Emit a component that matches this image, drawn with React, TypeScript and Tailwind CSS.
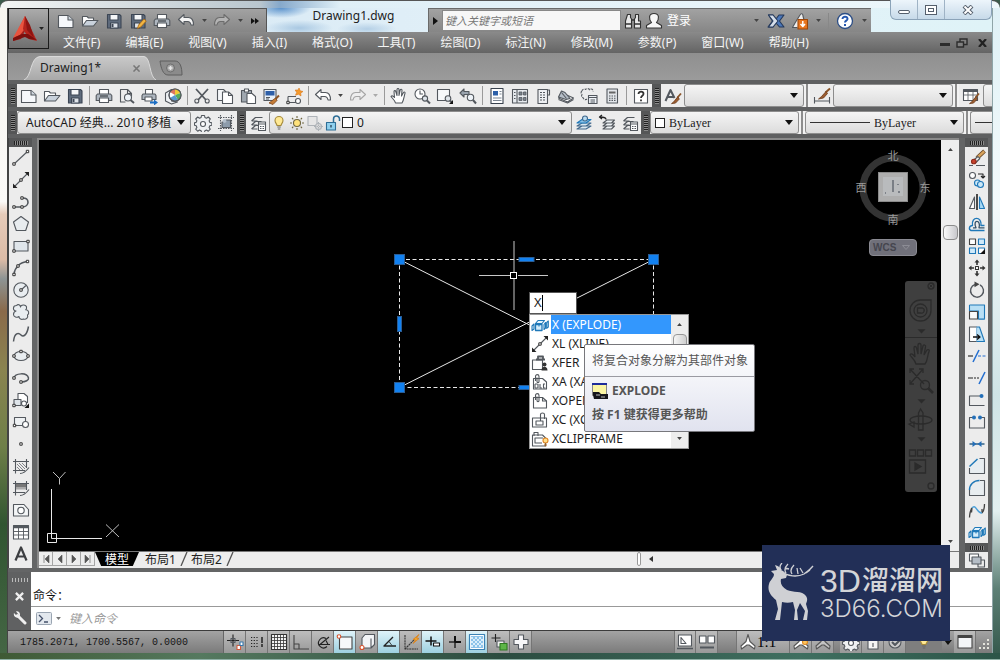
import React, { useState } from 'react';
import type { ReactNode } from 'react';

const UI = "font-['Noto_Sans','Noto_Sans_CJK_SC',sans-serif]";

/* ---------- icons: 18 x 18 grid ---------- */

function Ic({ children, s = '#53585e', w = 1.1 }: { children: ReactNode; s?: string; w?: number }) {
  return (
    <svg viewBox="0 0 18 18" className="size-[18px] shrink-0" fill="none" stroke={s} strokeWidth={w} strokeLinejoin="round" aria-hidden="true">
      {children}
    </svg>
  );
}

const D = '#3d3f42';
const B = '#1f78b8';
const node = (x: number, y: number, k: string) => <rect key={k} x={x - 1.2} y={y - 1.2} width="2.4" height="2.4" fill="#fff" stroke="#333" strokeWidth="1" />;

const newDoc = <Ic><path d="M1.5 3.5h9.5l5 4.5v7.5h-14.500z" fill="#f6f8fb" /><path d="M11 3.500v4.500h5" fill="#cfd6de" /></Ic>;
const openDoc = <Ic><path d="M1.500 14v-9.500h4.500l1.500 1.500h5v3" fill="#fff" /><path d="M1.500 14l4-5.500h11.500l-4.500 5.500z" fill="#c9d2dc" /></Ic>;
const saveDoc = <Ic s="#3c4654"><path d="M2.500 2.500h12l1.500 1.500v12h-13.500z" fill="#5f6c7d" /><path d="M5 2.500h8v5.500h-8z" fill="#f4f6f8" /><path d="M5.500 11h7.500v5h-7.500z" fill="#dfe4ea" /><path d="M7.500 12v3" strokeWidth="2" /></Ic>;
const saveAs = <Ic s="#3c4654"><path d="M2.500 2.500h12l1.500 1.500v12h-13.500z" fill="#5f6c7d" /><path d="M5 2.500h8v5.500h-8z" fill="#f4f6f8" /><path d="M5.500 11h5v5h-5z" fill="#dfe4ea" /><path d="M8.500 16.500l1-3.500 5.500-6 2.300 2-5.500 6z" fill="#f2b543" stroke="#a36414" strokeWidth=".8" /></Ic>;
const printer = <Ic><path d="M4.500 7v-4.500h9v4.500" fill="#fff" /><path d="M2.500 7h13l1.300 1.500v5h-15.600v-5z" fill="#aeb6bf" /><path d="M4.500 11h9v4.500h-9z" fill="#fff" /><path d="M5 9h8" strokeWidth="1.500" /></Ic>;
const preview = <Ic><path d="M9.500 2.500h-7v12.500h5M9.500 2.500l4 4v3" fill="none" /><path d="M9.500 2.500v4h4" /><circle cx="10" cy="10.500" r="3.500" fill="#eef3f8" /><path d="M12.500 13l3.500 3" strokeWidth="2" /></Ic>;
const publish = <Ic><path d="M4.500 7v-4.500h7v4.500" fill="#fff" /><path d="M2 7h12l1 1.500v4h-14v-4z" fill="#aeb6bf" /><path d="M4 10h7v4h-7z" fill="#fff" /><path d="M9 14.500h4v-2l4 3-4 3v-2h-4z" fill="#1d6fc4" stroke="none" /></Ic>;
const sphere = <Ic><path d="M1.500 6l6-3.500v11.500l6 1-6 2-6-3z" fill="#eef1f4" /><circle cx="11" cy="8" r="6" fill="#fff" /><path d="M11 8V2a6 6 0 0 1 5.500 4z" fill="#f0ca35" stroke="none" /><path d="M11 8l5.500-2a6 6 0 0 1-2.500 7z" fill="#56ac5c" stroke="none" /><path d="M11 8l3 5a6 6 0 0 1-8-2z" fill="#5898cf" stroke="none" /><path d="M11 8L6 5a6 6 0 0 1 5-3z" fill="#dc7661" stroke="none" /><circle cx="11" cy="8" r="6" /></Ic>;
const cut = <Ic><path d="M3 2l10 11M15 2L5 13" strokeWidth="1.800" /><circle cx="3.800" cy="14" r="2" /><circle cx="14.200" cy="14" r="2" /></Ic>;
const copy = <Ic><path d="M1.500 2.500h6l2.500 2.500v8.500h-8.500z" fill="#f4f6f8" /><path d="M6.500 5h6l4 3.500v8h-10z" fill="#fff" /><path d="M12.500 5v3.500h4" /></Ic>;
const paste = <Ic><path d="M2.500 3.500h10v11.500h-10z" fill="#a0a8b0" /><path d="M5.500 2h4v3h-4z" fill="#fff" /><path d="M8 6.500h5l3.500 3v7h-8.500z" fill="#fff" /></Ic>;
const match = <Ic><path d="M2 2.500h12v11h-12z" fill="#e8f0f8" /><path d="M3.500 4h9v4.500h-9z" fill="#2e5fa8" stroke="none" /><path d="M4 10.500h4M4 12h3" /><path d="M17 8.500l-3.500 3.500" stroke="#8a5428" strokeWidth="2" /><path d="M13.500 11l1.500 2.500-4 4-4-1.500z" fill="#c47b35" stroke="#7b461c" strokeWidth=".8" /></Ic>;
const blockEd = <Ic><path d="M3 9.500h8M3 9.500v6h10M13 11v4.500" /><circle cx="13" cy="14" r="2.500" fill="#fff" /><path d="M14 1l1.200 2.800 2.800.7-2.300 1.500.3 3-2.500-1.800-3 1 1.200-2.700-1.500-2.500h3z" fill="#f49a2c" stroke="#d8761a" strokeWidth=".6" />{node(3, 15.500, 'a')}</Ic>;
const undo = (c: string) => <Ic><path d="M1.500 7.500l5.500-5v3h4.500c3 0 5 2.500 5 7.500h-2.500c-.5-3-1.500-3.500-3.500-3.500h-3.500v3z" fill={c} /></Ic>;
const redo = (c: string, s: string) => <Ic s={s}><path d="M16.500 7.500l-5.500-5v3h-4.500c-3 0-5 2.500-5 7.500h2.500c.5-3 1.500-3.500 3.500-3.500h3.500v3z" fill={c} /></Ic>;
const hand = <Ic><path d="M5.500 16c-.5-2.500-3-4.500-4.500-6.500 1-1.200 2.200-.4 3.500 1L4 4.500c.2-1.200 1.500-1.200 1.800 0L7 8.500V2.500c.2-1.300 1.800-1.300 2 0v6l1.200-5.500c.4-1.200 1.800-1 1.800.3L11.500 9l2-3.500c.7-1 1.900-.3 1.500.8-1 3-1 6.500-3 9.700z" fill="#fff" /></Ic>;
const zoomRt = <Ic><circle cx="7" cy="7" r="5" fill="#fff" /><path d="M7 3.500v3.500h3" /><circle cx="12" cy="11.500" r="2.600" fill="#dfe5eb" /><path d="M14 13.500l3 3" strokeWidth="2" /></Ic>;
const zoomWin = <Ic><path d="M1.500 2.500h12v11h-12z" fill="#f6f8fa" /><circle cx="12" cy="11.500" r="2.800" fill="#dfe5eb" /><path d="M14 13.500l1.500 1.500" strokeWidth="1.800" /><path d="M17 13v4h-4z" fill="#111" stroke="none" /></Ic>;
const zoomPrev = <Ic><path d="M1 6l4-4v2.500h5v3h-5V10z" fill="#9aa4ae" /><circle cx="11.500" cy="10.500" r="3.200" fill="#eef3f8" /><path d="M14 13l3 3.500" strokeWidth="2" /></Ic>;
const props = <Ic s="#39424e"><path d="M3 1.500h12v15h-12z" fill="#fff" /><path d="M5 4h5v4.500h-5z" fill="#2d60a8" stroke="none" /><path d="M11.500 4.500h2M11.500 7h2M5 11h8.500M5 13.500h8.500" stroke="#7d8793" /></Ic>;
const dcenter = <Ic><path d="M1.500 2.500h15v13.500h-15zM6 2.500v13.500" fill="#e6eaee" /><path d="M3 5.500h1.500M3 8.500h1.500M3 11.500h1.500" /><path d="M8 5h3v3h-3zM12.500 5h2.500v3h-2.500zM8 10.500h3v3h-3zM12.500 10.500h2.500v3h-2.500z" fill="#79828c" strokeWidth=".8" /></Ic>;
const palette = <Ic><path d="M4 2.500h9.500v14h-9.500z" fill="#eef0f3" /><path d="M13.500 3h2v5h-2" /><path d="M6 5.500h5M6 8h5M6 10.500h5M6 13h5" strokeDasharray="2 1" /></Ic>;
const sheetSet = <Ic><path d="M1.500 11l7-3.500 8 3.500-6 4z" fill="#fff" /><path d="M1.500 10l3-6 3.500 1.500 5 6-4 1z" fill="#b6bec7" /><path d="M4.500 5.500l5 6" /><path d="M1.500 12.500l9 3.500 6-3.500" /></Ic>;
const markup = <Ic><path d="M2 4c0-2 3-2.500 3.500-1.500 1-1.500 4-1 4 .3 1.500-1.500 4-.5 3.500 1.500M2 4c-1.500 1-1 3 0 3.500-1 1.500 0 3.500 1.500 3.500 0 2 2.500 2 3.500 1" strokeDasharray="2.500 1" /><path d="M8.500 8.500h8.500v8h-8.500z" fill="#eef2f6" /><path d="M8.500 10.500h8.500M10.500 13h4.500M10.500 15h4.500" /></Ic>;
const calc = <Ic><path d="M4 2h10.500v14h-10.500z" fill="#e3e6ea" /><path d="M6 4.500h6.500v2h-6.500z" fill="#666" stroke="none" /><path d="M6 9h7M6 11.200h7M6 13.400h7" strokeDasharray="1.500 1" /></Ic>;
const help = <Ic><path d="M2.500 2.500h13v13.500h-13z" fill="#fff" /><path d="M6.500 7c0-3.300 5.300-3 5 0-.2 1.800-2.500 1.800-2.500 4M9 12.500v1.800" strokeWidth="1.800" stroke="#333" /></Ic>;
const brush = <g><path d="M17 6.500l-3.500 4" stroke="#8a5428" strokeWidth="1.800" /><path d="M13.800 9.800l1.500 2.300-3.800 4-4 .5 2-1.500z" fill="#9c5c30" stroke="#6b3a18" strokeWidth=".8" /></g>;
const textStyle = <Ic><path d="M1.500 14L6.500 3l4 8M3.300 10h6" strokeWidth="2" />{brush}</Ic>;
const dimStyle = <Ic><path d="M1.500 10v6.500M16.500 10v6.500M1.500 14h15" /><path d="M17 1.500l-4.500 4" stroke="#8a5428" strokeWidth="2" /><path d="M13 4.500l1.500 2-4 4.500-5 1 3-2.500z" fill="#9c5c30" stroke="#6b3a18" strokeWidth=".8" /></Ic>;
const tableStyle = <Ic><path d="M1.500 2.500h14v11h-14z" fill="#fff" /><path d="M1.500 4h14" strokeWidth="2" /><path d="M1.500 8h14M6 4v9.500M11 4v9.500" strokeWidth=".8" />{brush}</Ic>;
const gear = <Ic><path d="M7.500 1.500h3l.4 2 1.600.7 1.800-1.200 2 2-1.200 1.800.7 1.600 2 .4v2.500l-2 .5-.7 1.600 1.200 1.800-2 2-1.800-1.200-1.600.7-.4 1.800h-3l-.4-1.800-1.600-.7-1.800 1.200-2-2 1.200-1.800-.7-1.600-1.700-.5V8.800l1.700-.4.7-1.600L1.700 5l2-2 1.800 1.200 1.600-.7z" fill="#eef0f2" /><circle cx="9" cy="10" r="2.500" fill="#fff" /></Ic>;
const workspace = <Ic><path d="M1 3.500h16M1 14.500h16M3.500 1v16M14.500 1v16" strokeDasharray="1.500 1" /><path d="M5 8h3l1-2h4.500v7.500H5z" fill="#8d9cab" /><circle cx="7.500" cy="7" r="2" fill="#b4c0cc" stroke="none" /></Ic>;
const layers = (acc: ReactNode) => <Ic><path d="M2.500 7l4-3.500h7M2.500 7h6M2.500 11l4-3.500h6M2.500 11h6M2.500 15l4-3.500h6M2.500 15h6" strokeWidth="1.200" />{acc}</Ic>;
const layerProps = layers(<g><path d="M9.500 8h7v8.500h-7z" fill="#fff" /><path d="M9.500 10h7M11 12.500h1.500M13.500 12.500h1.500M11 14.500h1.500M13.500 14.500h1.500" /></g>);
const layerCur = <Ic s="#42698c"><path d="M2 15l5-3h9l-5 3zM2 12l5-3h9l-5 3z" fill="#dde8f0" /><path d="M2 9l5-3.500h9l-5 3.500z" fill="#8ac2e8" stroke={B} /><circle cx="10" cy="4.500" r="2.500" fill="#b8dcf2" /></Ic>;
const layerPrev = <Ic><path d="M5 9l4-3h7.500l-3 3zM5 12l4-3h7.500l-3 3zM5 15l4-3h7.500l-3 3z" fill="#eef2f5" /><path d="M8 5.500C8 3.500 6 3 2 3M4 1L1.500 3 4 5" stroke="#222" strokeWidth="1.300" /></Ic>;
const bulb = <Ic><path d="M7 11.500c0-1.500-2-2.500-2-5a4 4 0 0 1 8 0c0 2.500-2 3.500-2 5z" fill="#ffe994" stroke="#a58a3a" /><path d="M7.300 13h3.500M7.800 15h2.500" stroke="#666" /></Ic>;
const sun = <Ic s="#6f6640"><circle cx="9" cy="9" r="3.500" fill="#ffe27a" /><path d="M9 2v2M9 14v2M2 9h2M14 9h2M4 4l1.300 1.300M12.700 12.700l1.300 1.300M4 14l1.300-1.300M12.700 5.300L14 4" /></Ic>;
const vpFreeze = <Ic s="#aeb3b8"><path d="M2 2.500h9v9h-9z" fill="#e6e6e6" /><circle cx="12.500" cy="12.500" r="3" fill="#ddd" /><path d="M12.500 8v9M8 12.500h9" strokeDasharray="1.500 1" /></Ic>;
const lock = <Ic s="#2d6e96"><path d="M9.500 8.500v-3.500a3 3 0 0 1 6 0v2" strokeWidth="1.500" /><path d="M2.500 8.500h9v7.500h-9z" fill="#8fd0ee" /><path d="M7 11v2.500" stroke="#123" /></Ic>;

const drawTools: { name: string; icon: ReactNode }[] = [
  { name: '直线', icon: <Ic><path d="M2 15L15.500 2.500" />{node(2, 15, 'a')}{node(15.500, 2.500, 'b')}</Ic> },
  { name: '构造线', icon: <Ic><path d="M2 16L16 2" /><path d="M1 17v-4.500l4.500 4.500zM17 1v4.500L12.500 1z" fill="#222" stroke="none" />{node(9, 9, 'a')}</Ic> },
  { name: '多段线', icon: <Ic><path d="M2 14h8M10 5c8-1 8 9 0 9" strokeWidth="1.600" />{node(2, 14, 'a')}{node(10, 14, 'b')}{node(10, 5, 'c')}</Ic> },
  { name: '正多边形', icon: <Ic><path d="M9 1.500l7.500 5.500-2.800 8.500H4.300L1.500 7z" fill="#e8ecef" /></Ic> },
  { name: '矩形', icon: <Ic><path d="M2 4.500h14v9.500h-14z" fill="#dfe5ea" />{node(2, 14, 'a')}{node(16, 4.500, 'b')}</Ic> },
  { name: '圆弧', icon: <Ic><path d="M2 15c.5-6 6-12 13.500-12.500" strokeWidth="1.500" />{node(2, 15.500, 'a')}{node(6, 7, 'b')}{node(15.500, 2.500, 'c')}</Ic> },
  { name: '圆', icon: <Ic><circle cx="9" cy="9" r="7.200" fill="#e9edf0" /><path d="M9 9l5-4.500" />{node(9, 9, 'a')}</Ic> },
  { name: '修订云线', icon: <Ic><path d="M4 8C.5 8 .5 2.500 4.500 2.500 6 .8 8.500 2 8.500 4c0-2.500 5.500-3 6 0 .3 1.200 0 2-.8 2.800C17 6.500 17.500 11 15.500 12c1 2.500-1.500 5-4 4-2 1-4.500 0-4.500-2.500-2 1.500-5.500.5-5.500-2C1.500 10 2.500 8.500 4 8z" fill="#e9edf0" /></Ic> },
  { name: '样条曲线', icon: <Ic><path d="M1.500 16.500c1-9 5-9 7.500-6.500s6 0 7.500-8.500" strokeWidth="1.500" /></Ic> },
  { name: '椭圆', icon: <Ic><ellipse cx="9" cy="9" rx="7" ry="4.500" fill="#e9edf0" />{node(2, 9, 'a')}{node(16, 9, 'b')}{node(9, 4.500, 'c')}</Ic> },
  { name: '椭圆弧', icon: <Ic><path d="M2 9c1-5 13-6 14.500 0 .5 2-3 4-7 4" strokeWidth="1.500" />{node(2, 9, 'a')}{node(9, 13, 'b')}</Ic> },
  { name: '插入块', icon: <Ic><path d="M6 2.500h6l3.500 3v6h-9.500z" fill="#fff" /><path d="M2 8.500h7v6h-7z" fill="#dfe5ea" /><circle cx="12" cy="12.500" r="2.500" fill="#fff" />{node(2, 14.500, 'a')}<path d="M17 12.500v4.500h-4.500z" fill="#111" stroke="none" /></Ic> },
  { name: '创建块', icon: <Ic><path d="M2.500 4.500h11v8h-11z" fill="#eef1f3" /><circle cx="13.500" cy="11.500" r="3" fill="#fff" />{node(2.500, 12.500, 'a')}</Ic> },
  { name: '点', icon: <Ic>{node(9, 9, 'a')}</Ic> },
  { name: '图案填充', icon: <Ic><path d="M1 4.500h16M1 13.500h12M3.500 2v14.500M14.500 2v9M8 16.500c4 0 6-2 9-6" /><path d="M5 10l3 3M5 7l6 6M7 6l6 6M10 6l4 4" strokeWidth=".7" /></Ic> },
  { name: '渐变色', icon: <Ic><path d="M4 5h10v3H4z" fill="#777" stroke="none" /><path d="M4 8h10v2.500H4z" fill="#aaa" stroke="none" /><path d="M1 4.500h16M1 13.500h12M3.500 2v14.500M14.500 2v9M8 16.500c4 0 6-2 9-6" /></Ic> },
  { name: '面域', icon: <Ic><path d="M1.500 3.500h10.500l4.500 5v6.500h-15z" fill="#f4f6f7" /><circle cx="9" cy="9.500" r="3.200" fill="#fff" /></Ic> },
  { name: '表格', icon: <Ic><path d="M1.500 2.500h15v13.500h-15z" fill="#fff" /><path d="M1.500 4h15" strokeWidth="2.500" /><path d="M1.500 8.500h15M1.500 12h15M6.500 4v12M11.500 4v12" strokeWidth=".9" /></Ic> },
  { name: '多行文字', icon: <Ic s={D}><path d="M3.500 15.500L9 2.500l5.500 13M5.300 11.500h7.400" strokeWidth="2.200" /></Ic> },
];

const explode = <Ic s={B}><path d="M4.500 7.500l2.500-3h6.500l-2.500 3z" fill="#e4f4fd" /><path d="M4.500 8.500H11v6H4.500z" fill="#d4edfb" strokeWidth="1.300" /><path d="M1 10l2-2v5l-2 1.500zM13 8.500l1.500-2v5.500L13 13.500zM15.700 6.500L17.300 5v6l-1.600 1.300z" fill="#e4f4fd" /><path d="M8 8.500v2" /></Ic>;

const modifyTools: { name: string; icon: ReactNode }[] = [
  { name: '删除', icon: <Ic><path d="M16.500 2L9 9" stroke="#6b4a28" strokeWidth="4" /><path d="M16.200 2.300L9.300 8.700" stroke="#d9a35c" strokeWidth="2.500" /><path d="M10 7.500l1.800 2L8 13.500 5 11.500z" fill="#eee" /><circle cx="5.800" cy="12.500" r="2.300" fill="#c8402b" stroke="#8d2a1a" /><path d="M1 16.500h4M8 16.500h9" /></Ic> },
  { name: '复制', icon: <Ic><circle cx="4.500" cy="4.500" r="3" fill="#fff" /><path d="M10 3h5v3M13 5l2 2 2-2" stroke="#222" /><circle cx="9.500" cy="12" r="3" fill="#cce8f8" stroke={B} /><circle cx="12.500" cy="13.500" r="3" fill="#cce8f8" stroke={B} /></Ic> },
  { name: '镜像', icon: <Ic><path d="M6.500 4v11.500H1.500z" fill="#fff" /><path d="M9 1v16" stroke="#222" strokeWidth="1.600" /><path d="M11.500 4v11.500h5z" fill="#a5d8f5" stroke={B} /></Ic> },
  { name: '偏移', icon: <Ic s={B}><path d="M16.500 15.500H3c-2.500-1-2-5 1.500-5C3 1 14 1 13 10.500h3.500" strokeWidth="1.400" /><path d="M5 12.800h3c-4-8.500 5.500-8.500 3 0h5.500" stroke="#33526a" strokeWidth="1.300" /></Ic> },
  { name: '阵列', icon: <Ic s={B}><path d="M1.500 2h6v5.500h-6z" fill="#fff" stroke="#444" /><path d="M10.500 2h6v5.500h-6zM1.500 11h6v5.500h-6z" fill="#d0eafa" /><path d="M10.500 11h6v5.500h-6z" fill="#fff" /><path d="M17 12v5h-5z" fill="#111" stroke="none" /></Ic> },
  { name: '移动', icon: <Ic s="#333"><path d="M9 .5L11.500 3.500h-5zM9 17.500L6.500 14.500h5zM.5 9L3.500 6.500v5zM17.500 9L14.500 11.500v-5z" fill="#333" stroke="none" /><path d="M9 3v3M9 12v3M3 9h3M12 9h3" strokeWidth="1.600" /><path d="M7.500 7.500h3v3h-3z" fill="#fff" /></Ic> },
  { name: '旋转', icon: <Ic><path d="M7 3.500a6.500 6.500 0 1 0 5 .4" strokeWidth="1.400" /><path d="M6.500 .500l5 2.800-5 3z" fill="#444" stroke="none" /></Ic> },
  { name: '缩放', icon: <Ic s={B}><path d="M1.500 2h15v14h-6" fill="#b8dff5" /><path d="M1.500 2v6h9v8h6" fill="#b8dff5" /><path d="M1.500 8.500h8v7.500h-8z" fill="#f8fafb" stroke="#444" /></Ic> },
  { name: '拉伸', icon: <Ic><path d="M8.500 2h3l5 14.500h-8z" fill="#b8dff5" stroke={B} /><path d="M8.500 2h-7v14.500h7" fill="#fff" /><path d="M5 12h6M9 9.500l3 2.500-3 2.500" stroke="#111" strokeWidth="1.300" /></Ic> },
  { name: '修剪', icon: <Ic><path d="M0 9h5" stroke="#222" /><path d="M10 9h8" stroke="#246fd0" strokeDasharray="3 1.500" /><path d="M5 15l6-12" stroke="#246fd0" strokeWidth="1.500" /></Ic> },
  { name: '延伸', icon: <Ic><path d="M0 9h5M6 9h2M9 9h2" stroke="#222" /><path d="M11 15l6-12" stroke="#246fd0" strokeWidth="1.500" /></Ic> },
  { name: '打断于点', icon: <Ic><path d="M14 5H1.500v9.500h15" /><circle cx="13.500" cy="5" r="2" fill="#246fb8" stroke="none" /></Ic> },
  { name: '打断', icon: <Ic><path d="M5 4.500H1.500v10.500h15V4.500H13" /><circle cx="6" cy="4.500" r="2" fill="#246fb8" stroke="none" /><circle cx="12" cy="4.500" r="2" fill="#246fb8" stroke="none" /></Ic> },
  { name: '合并', icon: <Ic s="#24587e"><path d="M1.500 9h15" strokeWidth="1.400" /><path d="M4.500 6L8.500 9l-4 3zM13.500 6l-4 3 4 3z" fill="#246fb8" stroke="none" /></Ic> },
  { name: '倒角', icon: <Ic><path d="M1.500 9.500v7h15V1.500H10z" fill="#e8edf0" stroke="none" /><path d="M1.500 11v5.500h15V1.500H11.500" /><path d="M1.500 9.500l8-7.500" stroke={B} strokeWidth="1.500" /></Ic> },
  { name: '圆角', icon: <Ic><path d="M1.500 11v5.500h15V1.500H12" fill="#e8edf0" /><path d="M1.500 11c0-5.500 4-9.500 10-9.500" stroke={B} strokeWidth="1.500" /></Ic> },
  { name: '光顺曲线', icon: <Ic><path d="M1.500 16.500c.2-4 .5-7 2.500-9.500M3.500 11.500L4 7M14 12c2-2 2.500-5 2.500-9M14 12V8" stroke="#444" strokeWidth="1.300" /><path d="M4 7c4-5 5 6 10 5" stroke="#4b9fd8" strokeWidth="1.500" /></Ic> },
  { name: '分解', icon: explode },
];

/* ---------- small building blocks ---------- */

function Tool({ name, children, className = 'h-[23px] w-[23px] shrink-0' }: { name: string; children: ReactNode; className?: string }) {
  return (
    <button type="button" aria-label={name} title={name} className={`flex items-center justify-center ${className}`}>
      {children}
    </button>
  );
}

function Caret({ color = '#111', small = false }: { color?: string; small?: boolean }) {
  return (
    <svg viewBox="0 0 8 5" className={small ? 'h-[3px] w-[5px] shrink-0' : 'h-[5px] w-2 shrink-0'} aria-hidden="true">
      <path d="M0 0h8L4 5z" fill={color} />
    </svg>
  );
}

function Grip() {
  return (
    <div className="flex w-[9px] shrink-0 items-center justify-center bg-[#555657]">
      <div className="h-4 w-1 bg-[repeating-linear-gradient(180deg,#222_0px,#222_1px,#8a8a8a_1px,#8a8a8a_2px)]" />
    </div>
  );
}

function TopGrip() {
  return (
    <div className="flex h-[9px] shrink-0 items-center justify-center bg-[#555657]">
      <div className="h-1 w-3.5 bg-[repeating-linear-gradient(90deg,#222_0px,#222_1px,#8a8a8a_1px,#8a8a8a_2px)]" />
    </div>
  );
}

function Sep() {
  return <div className="mx-auto flex w-1.5 shrink-0 justify-center py-0.5"><div className="w-px bg-[#9a9a9a]" /></div>;
}

function DoubleSep() {
  return <div className="w-1.5 shrink-0 border-x-2 border-[#f2f2f2] bg-[#8d8d8d]" />;
}

function Combo({ label, value = '', className, text = 'text-xs', lead }: { label: string; value?: string; className: string; text?: string; lead?: ReactNode }) {
  return (
    <div className={`relative flex items-center rounded-[3px] border border-[#8d8d8d] bg-linear-to-b from-[#f5f5f5] to-[#dcdcdc] ${className}`}>
      {lead}
      <select aria-label={label} className={`h-full min-w-0 flex-1 appearance-none bg-transparent pr-4 text-[#1b1b1b] outline-none ${text}`}>
        <option>{value}</option>
      </select>
      <span className="pointer-events-none absolute right-[5px]"><Caret /></span>
    </div>
  );
}

/* ---------- header ---------- */

const menus = ['文件(F)', '编辑(E)', '视图(V)', '插入(I)', '格式(O)', '工具(T)', '绘图(D)', '标注(N)', '修改(M)', '参数(P)', '窗口(W)', '帮助(H)'];

function TitleBar() {
  return (
    <div className="flex h-6 bg-[linear-gradient(90deg,#d3e6f3,#e5f2f9_60%,#dff3f7)]">
      <div className="flex shrink-0 items-center border-r border-t border-[#555] bg-linear-to-b from-[#a2a2a2] to-[#868686] pl-[46px] pr-0.5">
        <Tool name="新建" className="h-6 w-6">{newDoc}</Tool>
        <Tool name="打开" className="h-6 w-6">{openDoc}</Tool>
        <Tool name="保存" className="h-6 w-6">{saveDoc}</Tool>
        <Tool name="另存为" className="h-6 w-6">{saveAs}</Tool>
        <Tool name="打印" className="h-6 w-6">{printer}</Tool>
        <Tool name="放弃" className="h-6 w-6">{undo('#f4f4f4')}</Tool>
        <Tool name="放弃列表" className="h-6 w-3"><Caret small color="#444" /></Tool>
        <Tool name="重做" className="h-6 w-6">{redo('#b4b4b4', '#6c6c6c')}</Tool>
        <Tool name="重做列表" className="h-6 w-3"><Caret small color="#444" /></Tool>
        <Tool name="更多" className="h-6 w-[18px]">
          <svg viewBox="0 0 8 6" className="h-1.5 w-2" aria-hidden="true"><path d="M0 0l4 3-4 3zM4 0l4 3-4 3z" fill="#111" /></svg>
        </Tool>
      </div>
      <div className="flex w-[161px] shrink-0 justify-center bg-[radial-gradient(ellipse_30px_10px_at_14px_0px,#5c93cc,transparent),radial-gradient(ellipse_34px_8px_at_32px_20px,#a9c8e2,transparent),radial-gradient(ellipse_30px_7px_at_100px_21px,#b5d0e6,transparent)] pl-3 text-xs leading-4 text-[#222]">Drawing1.dwg</div>
      <div className="flex w-[443px] shrink-0 items-center border-l border-t border-[#6a6a6a] bg-linear-to-b from-[#a2a2a2] to-[#868686]">
        <Tool name="收起搜索" className="h-6 w-[13px] shrink-0">
          <svg viewBox="0 0 5 8" className="h-2 w-[5px]" aria-hidden="true"><path d="M0 0l5 4-5 4z" fill="#111" /></svg>
        </Tool>
        <input aria-label="搜索" placeholder="键入关键字或短语" className="h-[21px] w-[179px] border border-[#888] bg-[#f7f7f7] px-0.5 text-[11px] italic outline-none placeholder:text-[#777]" />
        <Tool name="查找" className="h-6 w-6 shrink-0">
          <Ic s="#333"><path d="M3.500 2.500h3v3l1 1.500v9H1.500V9zM11.500 2.500h3V9l2 0v7h-6V7l1-1.500z" fill="#e9e9e9" /><path d="M1.500 12h6M10.500 12h6M7.500 8h3" strokeWidth="1.300" /></Ic>
        </Tool>
        <button type="button" className="flex items-center gap-1 text-xs text-white">
          <Ic s="#333"><path d="M9 1.500c6 0 5 6 2.500 9l5 3v2.500h-15v-2.500l5-3c-2.500-3-3.500-9 2.500-9z" fill="#f6f6f6" /></Ic>
          登录
        </button>
        <div className="ml-auto flex items-center">
          <Tool name="帐户列表" className="h-6 w-3"><Caret small color="#444" /></Tool>
          <Tool name="交换" className="ml-0.5 h-6 w-6">
            <Ic s="#24395c"><path d="M1.500 3H6l3 4 3-4h5l-4.500 6 4.500 6h-4.500l-3.500-4-3 4h-5l4.500-6z" fill="#4a76b8" /><path d="M1.500 3H6l5 6-5 6H1.500L6 9z" fill="#d5deea" /></Ic>
          </Tool>
          <Tool name="应用程序" className="h-6 w-6">
            <Ic><path d="M6 15.500H1.500L4 11 9 3c1-2 3-1.500 3 1L13 8" fill="#eee" /><path d="M7 7.500h9.500v9.500H7z" fill="#e8761f" stroke="#9e4708" /><path d="M11.800 9v5M9.500 12l2.300 2.500L14 12" stroke="#fff" strokeWidth="1.500" /></Ic>
          </Tool>
          <Tool name="应用列表" className="h-6 w-3"><Caret small color="#444" /></Tool>
          <div className="mx-1 h-4 w-px bg-[#888]" />
          <Tool name="帮助" className="h-6 w-6">
            <Ic s="#2c4e86"><circle cx="9" cy="9" r="7.500" fill="#fff" strokeWidth="1.300" /><path d="M6.500 7c0-3.300 5.300-3 5 0-.2 1.800-2.500 1.500-2.500 3.500M9 12v2" strokeWidth="2" stroke="#2457b0" /></Ic>
          </Tool>
          <Tool name="帮助列表" className="h-6 w-3.5"><Caret small color="#444" /></Tool>
        </div>
      </div>
      <div className="-mt-2 ml-auto flex h-5 shrink-0 rounded-b-md border border-t-0 border-[#8ba3b8] bg-linear-to-b from-[#edf5fb] to-[#c7dae9]">
        <Tool name="最小化" className="h-full w-[27px] border-r border-[#9fb3c5]"><span className="mt-1 h-1 w-3 rounded-sm border border-[#555f6c] bg-white" /></Tool>
        <Tool name="最大化" className="h-full w-[27px] border-r border-[#9fb3c5]"><span className="flex h-2.5 w-3 items-center justify-center border border-[#555f6c] bg-white"><span className="h-1 w-1.5 border border-[#555f6c]" /></span></Tool>
        <Tool name="关闭" className="h-full w-[46px]">
          <svg viewBox="0 0 12 10" className="h-2.5 w-3" aria-hidden="true"><path d="M2 1l8 8M10 1L2 9" stroke="#555f6c" strokeWidth="4" /><path d="M2.500 1.500l7 7M9.500 1.500l-7 7" stroke="#fff" strokeWidth="2" /></svg>
        </Tool>
      </div>
    </div>
  );
}

function Header() {
  return (
    <header className="relative">
      <TitleBar />
      <button type="button" aria-label="应用程序菜单" className="absolute left-0 top-0 flex h-[41px] w-[41px] items-center border border-[#1c1c1c] bg-linear-to-b from-[#ababab] to-[#6f6f6f] pl-1">
        <svg viewBox="0 0 24 26" className="h-[26px] w-6" aria-hidden="true">
          <path d="M12 0L0 25l8-2 4-8z" fill="#a5211c" />
          <path d="M12 0L0 22l7-3 7-9z" fill="#e9543f" />
          <path d="M12 0l12 25-8-2-6-10z" fill="#b3241d" />
          <path d="M12 0l5 9 4 13-7-8z" fill="#8c1512" />
          <path d="M0 22l9-4 6 0 9 6-8-1-4-2-12 4z" fill="#7c100e" />
        </svg>
        <span className="ml-0.5"><Caret small color="#222" /></span>
      </button>
      <nav className="flex h-[21px] items-center gap-[25px] bg-linear-to-b from-[#8a8a8a] to-[#646464] pl-[55px] text-xs text-[#f4f4f4]">
        {menus.map((m) => <button key={m} type="button" className="shrink-0 leading-4">{m}</button>)}
        <div className="ml-auto flex items-center gap-1.5 pr-[5px]">
          <button type="button" aria-label="最小化文档" className="mt-1 h-[3px] w-2.5 bg-[#2c2c2c]" />
          <button type="button" aria-label="还原文档"><svg viewBox="0 0 12 10" className="h-2.5 w-3" fill="#808080" stroke="#2c2c2c" strokeWidth="1.400" aria-hidden="true"><path d="M4 1h7v5.500H4z" /><path d="M1 4h6.500v5H1z" /></svg></button>
          <button type="button" aria-label="关闭文档"><svg viewBox="0 0 9 8" className="ml-1 h-2 w-[9px]" aria-hidden="true"><path d="M1 0l7 8M8 0L1 8" stroke="#222" strokeWidth="2.200" /></svg></button>
        </div>
      </nav>
      <div className="flex h-[27px] items-end bg-linear-to-b from-[#8f8f8f] to-[#9b9b9b] pl-4">
        <div className="relative flex h-6 w-[132px] items-center pl-4 pr-4 text-xs text-[#222]">
          <svg viewBox="0 0 132 24" className="absolute inset-0 h-full w-full" aria-hidden="true">
            <defs><linearGradient id="tab" x1="0" y1="0" x2="0" y2="1"><stop offset="0" stopColor="#c9c9c9" /><stop offset="1" stopColor="#a9a9a9" /></linearGradient></defs>
            <path d="M0 24c8-3 6-23 16-23.500h104c7 .5 5 20.500 12 23.500z" fill="url(#tab)" />
            <path d="M0 24c8-3 6-23 16-23.500h104c7 .5 5 20.500 12 23.500" fill="none" stroke="#dadada" />
          </svg>
          <a href="#drawing" className="relative">Drawing1*</a>
          <button type="button" aria-label="关闭标签" className="relative ml-auto"><svg viewBox="0 0 8 8" className="size-[7px]" aria-hidden="true"><path d="M.5.5l7 7M7.500.5l-7 7" stroke="#777" strokeWidth="1.800" /></svg></button>
        </div>
        <button type="button" aria-label="新建标签" className="mb-1 ml-[3px]">
          <svg viewBox="0 0 24 16" className="h-4 w-6" aria-hidden="true"><path d="M1 1h15c5 0 7 6 7 14H9C4 15 2 8 1 1z" fill="#8b8b8b" stroke="#5f5f5f" /><circle cx="11.500" cy="8" r="4" fill="#a4a4a4" stroke="#6d6d6d" /><path d="M11.500 6v4M9.500 8h4" stroke="#e6e6e6" strokeWidth="1.500" /></svg>
        </button>
      </div>
    </header>
  );
}

function Toolbars() {
  return (
    <div className="flex flex-col gap-1 overflow-hidden bg-[#5f6061] py-1">
      <div className="flex h-[23px]">
        <Grip />
        <div className="flex shrink-0 bg-[#ececec]">
          <Tool name="新建">{newDoc}</Tool><Tool name="打开">{openDoc}</Tool><Tool name="保存">{saveDoc}</Tool>
          <Sep />
          <Tool name="打印">{printer}</Tool><Tool name="打印预览">{preview}</Tool><Tool name="发布">{publish}</Tool><Tool name="三维打印">{sphere}</Tool>
          <Sep />
          <Tool name="剪切">{cut}</Tool><Tool name="复制">{copy}</Tool><Tool name="粘贴">{paste}</Tool><Tool name="特性匹配">{match}</Tool><Tool name="块编辑器">{blockEd}</Tool>
          <Sep />
          <Tool name="放弃">{undo('#fff')}</Tool>
          <Tool name="放弃列表" className="w-3"><Caret small color="#444" /></Tool>
          <Tool name="重做">{redo('#eee', '#a5a5a5')}</Tool>
          <Tool name="重做列表" className="w-3"><Caret small color="#aaa" /></Tool>
          <Sep />
          <Tool name="平移">{hand}</Tool><Tool name="实时缩放">{zoomRt}</Tool><Tool name="窗口缩放">{zoomWin}</Tool><Tool name="缩放上一个">{zoomPrev}</Tool>
          <Sep />
          <Tool name="特性">{props}</Tool><Tool name="设计中心">{dcenter}</Tool><Tool name="工具选项板">{palette}</Tool><Tool name="图纸集">{sheetSet}</Tool><Tool name="标记集">{markup}</Tool><Tool name="计算器">{calc}</Tool>
          <Sep />
          <Tool name="帮助">{help}</Tool>
        </div>
        <Grip />
        <div className="flex min-w-0 flex-1 overflow-hidden bg-[#ececec]">
          <Tool name="文字样式">{textStyle}</Tool>
          <Combo label="文字样式" className="w-[120px] shrink-0" />
          <DoubleSep />
          <Tool name="标注样式">{dimStyle}</Tool>
          <Combo label="标注样式" className="w-[120px] shrink-0" />
          <DoubleSep />
          <Tool name="表格样式" className="h-[23px] w-6 shrink-0">{tableStyle}</Tool>
          <Combo label="表格样式" className="w-[120px] shrink-0" />
        </div>
      </div>
      <div className="flex h-[23px]">
        <Grip />
        <div className="flex shrink-0 bg-[#ececec]">
          <Combo label="工作空间" value="AutoCAD 经典... 2010 移植" className="w-[174px] pl-2" />
          <Tool name="工作空间设置">{gear}</Tool>
          <Tool name="我的工作空间">{workspace}</Tool>
        </div>
        <Grip />
        <div className="flex min-w-0 flex-1 bg-[#ececec]">
          <Tool name="图层特性">{layerProps}</Tool>
          <Combo
            label="图层"
            value="0"
            className="min-w-0 flex-1"
            lead={<span className="flex shrink-0 items-center">{bulb}{sun}{vpFreeze}{lock}<span className="mr-1 h-[11px] w-[11px] border border-[#222] bg-white" /></span>}
          />
          <Tool name="置为当前">{layerCur}</Tool><Tool name="上一个图层">{layerPrev}</Tool><Tool name="图层状态">{layerProps}</Tool>
        </div>
        <Grip />
        <div className="flex shrink-0 bg-[#ececec]">
          <Combo label="颜色" value="ByLayer" text="text-xs font-['Liberation_Serif',serif]" className="w-[149px] pl-1" lead={<span className="mr-1 h-2.5 w-2.5 border border-[#222] bg-white" />} />
          <DoubleSep />
          <Combo label="线型" value="ByLayer" text="text-xs font-['Liberation_Serif',serif]" className="w-[159px] pl-1" lead={<span className="mr-1 h-px w-[60px] bg-[#333]" />} />
          <DoubleSep />
          <div className="flex w-[22px] items-center rounded-l-[3px] border border-r-0 border-[#8d8d8d] bg-linear-to-b from-[#f5f5f5] to-[#dcdcdc] pl-1"><span className="h-px flex-1 bg-[#333]" /></div>
        </div>
      </div>
    </div>
  );
}

/* ---------- drawing area ---------- */

function GripBox({ x, y, w = 10, h = 10 }: { x: number; y: number; w?: number; h?: number }) {
  return <rect x={x - w / 2} y={y - h / 2} width={w} height={h} fill="#1281f0" stroke="#2b5d94" strokeWidth="1" />;
}

function Model() {
  return (
    <svg viewBox="39 140 902 411" className="absolute inset-0 h-full w-full" aria-hidden="true">
      <g stroke="#e8e8e8" fill="none">
        <path d="M399.500 259.500L653.500 387.500M653.500 259.500L399.500 387.500" />
        <rect x="399.500" y="259.500" width="254" height="128" strokeDasharray="4 2.500" />
        <path d="M479 275.500h31M518 275.500h30M514 241v31M514 279v31" stroke="#c8c8c8" />
        <rect x="510.500" y="272.500" width="6" height="6" stroke="#fff" />
        <path d="M51.500 489v45M56 538.500h46M47.500 533.500h9v9h-9zM51.500 534v4.500h4.500" />
        <path d="M53 472l6.500 6.500 6-6.500M59.500 478.500v6M106 524.500l13 12.500M119 524.500l-13 12.500" stroke="#bdbdbd" />
      </g>
      <GripBox x={399.500} y={259.500} /><GripBox x={653.500} y={259.500} /><GripBox x={399.500} y={387.500} /><GripBox x={653.500} y={387.500} />
      <GripBox x={526.500} y={259.500} w={15} h={4} /><GripBox x={526.500} y={387.500} w={15} h={4} /><GripBox x={399.500} y={324} w={4} h={15} />
    </svg>
  );
}

function ViewCube() {
  return (
    <div className="absolute right-[7px] top-2 flex flex-col items-center">
      <svg viewBox="852 148 82 82" className="size-[82px] font-['Noto_Sans_CJK_SC',sans-serif] text-[11px]" role="img" aria-label="ViewCube">
        <circle cx="893" cy="188" r="30" fill="none" stroke="#333" strokeWidth="7" />
        <rect x="878.500" y="172.500" width="29" height="29" fill="#aeaeae" stroke="#8b8b8b" />
        <path d="M883 177h20v19h-20z" fill="#b9bbbd" />
        <path d="M893 180v12M898 184v1M899 191v2M885 193h1" stroke="#6b7078" strokeWidth="1.600" />
        <g fill="#9a9a9a" textAnchor="middle">
          <text x="893" y="160">北</text><text x="893" y="224">南</text><text x="861" y="192">西</text><text x="925" y="192">东</text>
        </g>
      </svg>
      <button type="button" className="mt-[9px] flex h-[17px] w-12 items-center gap-1.5 rounded-[4px] border border-[#8a8a92] bg-[#70707a] pl-[3px] font-['Liberation_Sans',sans-serif] text-[10px] font-bold leading-3 text-[#45454e]">
        WCS <svg viewBox="0 0 8 5" className="h-[5px] w-2" aria-hidden="true"><path d="M.5.500h7L4 4.500z" fill="none" stroke="#8c8c95" /></svg>
      </button>
    </div>
  );
}

function NavBar() {
  return (
    <svg viewBox="0 0 32 211" className="absolute right-1 top-[141px] h-[211px] w-8" fill="none" stroke="#2b2b2b" strokeWidth="1.300" role="img" aria-label="导航栏">
      <rect x="0" y="0" width="32" height="211" rx="3" fill="#3f3f3f" stroke="none" />
      <circle cx="26" cy="5" r="3" /><path d="M24.500 3.500l3 3M27.500 3.500l-3 3" strokeWidth="1" />
      <path d="M15.500 19a10.500 10.500 0 1 0 0 21 10.500 10.500 0 0 0 10.500-10.500V19z" /><circle cx="15.500" cy="29.500" r="6.500" /><path d="M12.500 27h5a2.500 2.500 0 1 1-2 5h-3z" />
      <path d="M14 49h5l-2.500 2.500z" fill="#2b2b2b" /><path d="M0 56.500h32" strokeWidth="1" />
      <path d="M11 83c-1-4-4-6-6-9 1-2 3-1 5 2l-1-9c0-2 2-2 2.500 0l1.500 6v-9c0-2 3-2 3 0v9l2-8c.5-2 3-1 2.500 1l-1.500 8 3-5c1-1 3 0 2 1.500-2 5-1 9-4 12.500z" />
      <path d="M5 88l14 15M18 88L5 103M5 92v-4h4M14 88h4v4M5 99v4h4" /><circle cx="20" cy="104" r="4.500" /><path d="M23 107l5 5" strokeWidth="2.500" />
      <path d="M14 119h5l-2.500 2.500z" fill="#2b2b2b" />
      <ellipse cx="16" cy="139" rx="11" ry="4" /><path d="M13.500 149v-17l2-4 2.500 4v17zM4 143l5-2v5z" />
      <path d="M14 157h5l-2.500 2.500z" fill="#2b2b2b" />
      <path d="M4.500 169h6v6h-6zM12.500 169h6v6h-6zM20.500 169h6v6h-6zM4.500 179h16v13h-16z" /><path d="M10 182l6 3.500-6 3.500z" fill="#2b2b2b" />
      <circle cx="26" cy="205" r="3" />
    </svg>
  );
}

const clip = (extra: ReactNode) => <Ic><path d="M2.500 5.500h9l4 3.500v7h-13z" fill="#fff" /><path d="M4.500 8V3.500c0-2.500 3.500-2.500 3.500 0v5c0 1.500-2 1.500-2 0v-4" />{extra}</Ic>;

const commands: { label: string; icon: ReactNode }[] = [
  { label: 'X (EXPLODE)', icon: explode },
  { label: 'XL (XLINE)', icon: drawTools[1].icon },
  { label: 'XFER', icon: <Ic><path d="M1.500 6h10v9.500h-10z" fill="#fff" /><path d="M7 5.500v-3h5v3M5 5.500h9" strokeWidth="1.800" /><circle cx="13.500" cy="10.500" r="2" fill="#333" stroke="none" /><path d="M10.500 16.500c0-5 6-5 6 0z" fill="#333" stroke="none" /></Ic> },
  { label: 'XA (XATTACH)', icon: clip(<path d="M4 11v4M7 11v4M9 11v4h2M14 11h-1.500v4h2M4 15h2.500M4 11h2.500" />) },
  { label: 'XOPEN', icon: clip(<path d="M11.500 5.500v3.500h4" />) },
  { label: 'XC (XCLIP)', icon: <Ic><path d="M1.500 7h14v9h-14z" fill="#fff" /><path d="M5 10h7v4h-7zM9.500 10V3.500c0-2 4-2 4 0V8" /></Ic> },
  { label: 'XCLIPFRAME', icon: <Ic><path d="M1.500 5h10l3 3v8h-13z" fill="#fff" /><path d="M12 8H4v5h7M3 6V2.500h4V6" /><circle cx="14.500" cy="10.500" r="2.500" fill="#ffe08a" stroke="#df8422" /><path d="M13.500 15h2" strokeWidth="2.500" stroke="#98612a" /></Ic> },
];

function CommandPopup() {
  const [value, setValue] = useState('X');
  return (
    <div className="absolute left-[490px] top-[152px]">
      <div className="flex h-[22px] w-12 items-center border border-[#555] bg-white pl-1 text-[13px] text-[#222]">
        <input aria-label="动态输入" value={value} onChange={(e) => setValue(e.target.value)} className="w-2 bg-transparent outline-none" />
        <span className="h-4 w-px bg-black" />
      </div>
      <div className="flex w-40 border border-[#999] bg-white">
        <ul role="listbox" aria-label="命令建议" className="min-w-0 flex-1">
          {commands.map((c, i) => (
            <li key={c.label} role="option" aria-selected={i === 0} className="flex h-[19px] items-center gap-0.5 pl-px">
              {c.icon}
              <span className={`h-full flex-1 truncate pl-px text-xs leading-[19px] ${i === 0 ? 'bg-[#3397fd] text-white' : 'text-[#1d1d1d]'}`}>{c.label}</span>
            </li>
          ))}
        </ul>
        <div className="flex w-[17px] flex-col items-center bg-[#ededed]">
          <span className="flex h-[19px] rotate-180 items-center"><Caret color="#444" small /></span>
          <span className="h-8 w-3.5 rounded-sm border border-[#979797] bg-linear-to-r from-[#f5f5f5] to-[#cfcfcf]" />
          <span className="mt-auto flex h-[19px] items-center"><Caret color="#444" small /></span>
        </div>
      </div>
      <div role="tooltip" className="absolute left-[55px] top-[52px] w-[171px] rounded-[2px] border border-[#77777c] bg-linear-to-b from-white to-[#e1e3ef] text-xs text-[#555]">
        <p className="h-8 whitespace-nowrap border-b border-[#9a9aa2] pl-[7px] leading-8">将复合对象分解为其部件对象</p>
        <p className="flex h-7 items-center gap-1 pl-[7px] font-bold">
          <svg viewBox="0 0 16 16" className="size-4" aria-hidden="true"><path d="M.5.500h14v12H.5z" fill="#fbf5a3" stroke="#888" /><path d="M0 0h15v2H0z" fill="#1e2c9c" /><path d="M1 12V9h6l2 2h7v5H2z" fill="#16161c" /><path d="M4 12h4M9 14h4" stroke="#bbb" /></svg>
          EXPLODE
        </p>
        <p className="h-[26px] pl-[7px] font-bold leading-5">按 F1 键获得更多帮助</p>
      </div>
    </div>
  );
}

function Slash() {
  return <svg viewBox="0 0 8 14" className="h-3.5 w-2 shrink-0" aria-hidden="true"><path d="M1 14L7 0" stroke="#555" strokeWidth="1.300" /></svg>;
}

function LayoutTabs() {
  const nav = [
    ['第一个', 'M3 0v8M8 0L4 4l4 4z'],
    ['上一个', 'M7 0L3 4l4 4z'],
    ['下一个', 'M3 0l4 4-4 4z'],
    ['最后一个', 'M7 0v8M2 0l4 4-4 4z'],
  ];
  return (
    <div className="flex h-[17px] items-start border-t border-[#777] bg-[#ededed] text-xs leading-[15px] text-[#222]">
      {nav.map(([n, d]) => (
        <button key={n} type="button" aria-label={n} className="flex h-3.5 w-3.5 items-center justify-center border-b border-r border-[#a5a5a5]">
          <svg viewBox="0 0 10 8" className="h-2 w-2.5" fill="#555" stroke="#555" strokeWidth=".6" aria-hidden="true"><path d={d} /></svg>
        </button>
      ))}
      <button type="button" className="h-3.5 w-11 bg-black text-center text-white [clip-path:polygon(0_0,100%_0,86%_100%,14%_100%)]">模型</button>
      <button type="button" className="ml-1.5">布局1</button>
      <span className="ml-1"><Slash /></span>
      <button type="button" className="ml-[3px]">布局2</button>
      <span className="ml-1"><Slash /></span>
      <div className="ml-auto flex w-[322px] items-center">
        <span className="h-3.5 w-1 rounded-sm border border-[#999] bg-white" />
        <svg viewBox="0 0 4 6" className="ml-2 h-1.5 w-1" aria-hidden="true"><path d="M4 0v6L0 3z" fill="#333" /></svg>
      </div>
    </div>
  );
}

function Workspace() {
  return (
    <div className="flex flex-1 bg-[#646566]">
      <div className="flex w-6 shrink-0 flex-col border-l border-[#444] bg-[#ececec]">
        <TopGrip />
        {drawTools.map((t) => <Tool key={t.name} name={t.name} className="h-[22px]">{t.icon}</Tool>)}
      </div>
      <div className="ml-[5px] flex min-w-0 flex-1 flex-col border-l-2 border-t-2 border-[#8a8a8a]">
        <div className="flex flex-1">
          <main className="relative min-w-0 flex-1 overflow-hidden bg-black" id="drawing">
            <Model />
            <ViewCube />
            <NavBar />
            <CommandPopup />
          </main>
          <div className="flex w-[18px] shrink-0 flex-col items-center bg-[#eeeeee] pt-2">
            <span className="rotate-180"><Caret color="#444" small /></span>
            <span className="mt-[74px] size-[15px] rounded-sm border border-[#8c8c8c] bg-linear-to-r from-[#fafafa] to-[#c8c8cc]" />
            <span className="mb-2 mt-auto"><Caret color="#444" small /></span>
          </div>
        </div>
        <LayoutTabs />
      </div>
      <div className="ml-1.5 mr-1 flex w-[23px] shrink-0 flex-col bg-[#ececec]">
        <TopGrip />
        {modifyTools.map((t) => <Tool key={t.name} name={t.name} className="h-[22px] shrink-0">{t.icon}</Tool>)}
        <TopGrip />
        <Tool name="绘图次序" className="h-4 shrink-0 overflow-hidden"><Ic><path d="M1.500 3h9v7h-9z" fill="#fff" /><path d="M4 6h9v7H4z" fill="#b5bdc6" /><path d="M10 13v3h6.500V9H13" /></Ic></Tool>
      </div>
    </div>
  );
}

/* ---------- command line and status bar ---------- */

function CommandLine() {
  return (
    <section className="flex border-t-4 border-[#646566] text-xs">
      <div className="flex w-[23px] flex-col items-center gap-2 bg-[#606162] pb-1 pt-1.5">
        <div className="h-1 w-4 bg-[repeating-linear-gradient(90deg,#bbb_0px,#bbb_1px,transparent_1px,transparent_3px)]" />
        <button type="button" aria-label="关闭命令行"><svg viewBox="0 0 10 10" className="my-0.5 size-[9px]" aria-hidden="true"><path d="M1 1l8 8M9 1L1 9" stroke="#f0f0f0" strokeWidth="2.500" /></svg></button>
        <button type="button" aria-label="自定义"><svg viewBox="0 0 14 14" className="size-3.5" aria-hidden="true"><path d="M4.500 4.500L12 12" stroke="#f0f0f0" strokeWidth="3" strokeLinecap="round" /><path d="M1 2l3 3 1.500-1.500L3 .500C6-.5 8.500 3 6 6.500 3 7.500 0 5 1 2z" fill="#f0f0f0" /></svg></button>
      </div>
      <div className="min-w-0 flex-1 bg-white">
        <p className="h-[35px] border-b border-[#999] pl-0.5 pt-4 text-xs leading-4 text-[#111]">命令：</p>
        <label className="flex h-[23px] items-center gap-1 pl-[5px]">
          <svg viewBox="0 0 16 13" className="h-[13px] w-4" aria-hidden="true"><rect x=".5" y=".5" width="15" height="12" rx="1" fill="#e3e8ee" stroke="#9aa5b2" /><path d="M3 3l3.500 3.500L3 10M8 10h4" fill="none" stroke="#44506a" strokeWidth="1.300" /></svg>
          <Caret small color="#777" />
          <input aria-label="命令" placeholder="键入命令" className="min-w-0 flex-1 bg-transparent pl-1 text-xs italic outline-none placeholder:text-[#9a9a9a]" />
        </label>
      </div>
    </section>
  );
}

const statusButtons: { name: string; on?: boolean; icon: ReactNode }[] = [
  { name: '推断约束', icon: <Ic><path d="M1 7.500h12M7 1.500v12" stroke="#222" /><path d="M5 5.500h4v4H5z" /><path d="M11 12.500h3.500v4H11z" fill="#fff" stroke="#d25b3d" /><path d="M14 9h3v3.500h-3z" fill="#fff" stroke="#3878ad" /></Ic> },
  { name: '捕捉模式', icon: <Ic s="#222"><path d="M3 4.500h8M3 7.500h8M3 10.500h8M3 13.500h8" strokeDasharray="1.200 1.500" /><path d="M14 4v10" strokeDasharray="6 1" strokeWidth="1.500" /></Ic> },
  { name: '栅格显示', icon: <Ic s="#333"><path d="M1.500 1.500h15v15h-15z" fill="#f5f5f5" /><path d="M4.500 1.500v15M7.500 1.500v15M10.500 1.500v15M13.500 1.500v15M1.500 4.500h15M1.500 7.500h15M1.500 10.500h15M1.500 13.500h15" strokeWidth=".8" /></Ic> },
  { name: '正交模式', icon: <Ic s="#444"><path d="M2 2v14h15M2 11h5v5" /></Ic> },
  { name: '极轴追踪', icon: <Ic s="#222"><path d="M13 13.500a5 5 0 1 1-1-8M5 11.500h11M6 11.500L15 4" /><path d="M12 7.500l2 4" /></Ic> },
  { name: '对象捕捉', on: true, icon: <Ic><path d="M3.500 4h12.500v12H3.500z" fill="#f6f8fa" stroke="#444" /><circle cx="3" cy="3.500" r="1.800" fill="#fff" stroke="#d8522c" /></Ic> },
  { name: '三维对象捕捉', icon: <Ic><path d="M4 5l3-3.500h9.500v10L13 15H4zM13 15V5.500" fill="#f2f4f6" /><circle cx="4" cy="14.500" r="2" fill="#fff" stroke="#d8522c" /></Ic> },
  { name: '对象捕捉追踪', on: true, icon: <Ic s="#222"><path d="M13 4L4 13h12" strokeWidth="1.400" /><path d="M9 8.500l3 4" strokeWidth=".8" /></Ic> },
  { name: '动态 UCS', icon: <Ic s="#333"><path d="M3 2v14h13M3 16L13 6" strokeDasharray="2 .6" /><path d="M17 1.500l-6 5 2.500.500-2.500 3.500 6-5-2.500-.5z" fill="#f4a52c" stroke="#d97f18" strokeWidth=".8" /></Ic> },
  { name: '动态输入', on: true, icon: <Ic s="#111"><path d="M1.500 8h11M7 3.500v9" strokeWidth="1.500" /><path d="M9.500 10h6v3h-6z" fill="#fff" /></Ic> },
  { name: '线宽', icon: <Ic s="#111"><path d="M3 9h12" strokeWidth="1.300" /><path d="M9 9h6" strokeWidth="2" /><path d="M9 3v6" strokeWidth="2" /><path d="M9 9v6" strokeWidth="1.300" /></Ic> },
  { name: '透明度', on: true, icon: <Ic s="#3c83b5"><path d="M1.500 1.500h15v15h-15z" fill="#fff" strokeWidth="1.200" /><path d="M3 3h12v12H3z" fill="#8cc3ea" stroke="none" /><path d="M3 5h12M3 9h12M3 13h12" stroke="#d9eefb" strokeDasharray="2 2" strokeWidth="2" /><path d="M5 7h10M5 11h10" stroke="#d9eefb" strokeDasharray="2 2" strokeWidth="2" /></Ic> },
  { name: '快捷特性', icon: <Ic><path d="M1.500 5h9M5.500 1v8" stroke="#222" /><path d="M7 8h7v6H7z" fill="#eee" /><path d="M10 10.500h7V17h-7z" fill="#5db548" stroke="#2f7a23" /></Ic> },
  { name: '选择循环', icon: <Ic><path d="M6.500 2h5v4.500H16v5h-4.500V16h-5v-4.500H2v-5h4.500z" fill="#f7f7f9" /></Ic> },
];

const statusBtn = 'h-full w-[22px] shrink-0 border-r border-[#757575] bg-linear-to-b from-[#bdbdbd] to-[#999]';
const statusOn = 'h-full w-[22px] shrink-0 border-r border-[#757575] bg-linear-to-b from-[#dff3f9] to-[#9dd0e0]';
const annot = (c: string) => <Ic s="#555"><path d="M9 1.500l2 7 5 4.500-.5 3-5.500-4h-2L2.500 16 2 13l5-4.500z" fill={c} /></Ic>;

function StatusBar() {
  return (
    <footer className="flex h-[23px] border-t border-[#3b3b3b] bg-linear-to-b from-[#a3a3a3] to-[#7b7b7b]">
      <output className="flex w-[216px] shrink-0 items-center whitespace-pre border-r border-[#666] pl-3 font-['Liberation_Mono',monospace] text-[10px] text-[#151515]">1785.2071, 1700.5567, 0.0000</output>
      {statusButtons.map((b) => <Tool key={b.name} name={b.name} className={b.on ? statusOn : statusBtn}>{b.icon}</Tool>)}
      <div className="ml-auto flex shrink-0">
        <Tool name="模型空间" className={`border-l ${statusBtn}`}><Ic><path d="M2.500 2h13v11h-13z" fill="#fff" /><path d="M5 4.500v6h5z" /><path d="M1 15.500h16" strokeWidth="1.500" /></Ic></Tool>
        <Tool name="快速查看" className={statusBtn}><Ic><path d="M1.500 3h6.500v7H1.500zM10 3h6.500v7H10z" fill="#fff" /><path d="M2 14.500h14" strokeWidth="2" /></Ic></Tool>
        <div className="w-[18px]" />
        <button type="button" className="flex w-[54px] items-center border-x border-[#757575] bg-linear-to-b from-[#bdbdbd] to-[#999] pl-0.5 font-['Liberation_Serif',serif] text-[15px] leading-4 text-black">{annot('#fff')}1:1</button>
        <Tool name="注释可见性" className={statusBtn}><Ic s="#555"><path d="M9 1.500l2 7 5 4.500-.5 3-5.500-4h-2L2.500 16 2 13l5-4.500z" fill="#fff" /><circle cx="13" cy="9" r="2.500" fill="#ffc45c" stroke="#dc8a26" /></Ic></Tool>
        <Tool name="自动缩放" className={statusBtn}>{annot('#c4c4c4')}</Tool>
        <Tool name="切换工作空间" className={`ml-1.5 ${statusBtn}`}>{gear}</Tool>
        <Tool name="锁定" className={statusBtn}><Ic><path d="M4 7h10v9H4z" fill="#f5f5f5" /><path d="M6 7V3h6v4M9 10v4" /></Ic></Tool>
        <Tool name="硬件加速" className={statusBtn}><Ic><circle cx="9" cy="9" r="6" fill="#ccc" /><path d="M6 9l3 3 5-5" strokeWidth="2" /></Ic></Tool>
        <Tool name="隔离对象" className="h-full w-9 bg-[#7e7e7e]">{bulb}</Tool>
        <Tool name="状态栏菜单" className="h-full w-3"><Caret /></Tool>
        <Tool name="全屏显示" className={statusBtn}><Ic s="#444"><path d="M2 2.500h14v12.500H2z" fill="#f4f6f8" /><path d="M2 4h14" strokeWidth="2" /></Ic></Tool>
        <svg viewBox="0 0 16 22" className="h-full w-4" fill="#e4e4dc" aria-hidden="true"><path d="M11 8h2v2h-2zM7 12h2v2H7zM11 12h2v2h-2zM3 16h2v2H3zM7 16h2v2H7zM11 16h2v2h-2z" /></svg>
      </div>
    </footer>
  );
}

function Badge() {
  return (
    <div className="absolute bottom-[19px] right-[50px] flex h-24 w-[188px] items-center bg-[#222f57] text-[#d4d5d8]">
      <svg viewBox="0 0 48 60" className="ml-1.5 h-[60px] w-12 shrink-0" fill="#cfd0d4" aria-hidden="true">
        <path d="M3 8l6-1-2-5c4 1 6 3 7 6l5 4-1 3-5 1c-1 5 1 8 6 11 6 3 15 0 19 6 2 3 1 5 0 8l2 7-1 9h-4l2-9-5-8-3 7 1 10h-4l1-10-2-8c-4 1-7 1-11 0l-1 9-1 9H7l3-11-2-9C3 33-1 28 1 21c1-4 5-6 5-10z" />
        <path d="M14 8c5 6 16 6 22 3 3-2 6-4 9-8M13 7c-2-3-1-5 1-7M18 10c-2-3-1-6 2-9M24 11c-2-3-1-6 2-9M30 11l-1-6M35 10l-3-5M17 5l4 1M38 10l4-3" fill="none" stroke="#cfd0d4" strokeWidth="1.300" />
      </svg>
      <div className="ml-1 flex flex-col">
        <div className="flex items-center gap-px font-['Liberation_Sans','Noto_Sans_CJK_SC',sans-serif] leading-8"><span className="text-[32px]">3D</span><span className="whitespace-nowrap text-[27px] font-medium">溜溜网</span></div>
        <div className="font-['Inter',sans-serif] text-[24px] font-light leading-6">3D66.COM</div>
      </div>
    </div>
  );
}

export default function App() {
  return (
    <div className={`relative flex min-h-screen flex-col overflow-hidden bg-[#3b5b4b] ${UI}`}>
      <div className="h-2 shrink-0 rounded-t-lg border-t border-[#555] bg-[linear-gradient(90deg,#f3f5f4,#b9c6ce_26%,#86a9cb_28%,#dfeff7_34%,#eef8fb)]" />
      <div className="flex flex-1">
        <div className="w-2 shrink-0 border-r border-[#444] bg-[linear-gradient(180deg,#f7f5ef,#fbfaf8_30%,#e6cbb9_32%,#dbbba6_39%,#8d9494_42%,#8a6a4a_47%,#8a8450_56%,#6f7f48_68%,#315531_80%,#446644)]" />
        <div className="flex min-w-0 flex-1 flex-col">
          <Header />
          <Toolbars />
          <Workspace />
          <CommandLine />
          <StatusBar />
        </div>
        <div className="w-2 shrink-0 border-l border-[#8fa5a8] bg-[linear-gradient(180deg,#dff1f6,#f3fafb_30%,#cfe4e6_60%,#e3f0f0_78%,#5d8076_90%,#365a4e)]" />
      </div>
      <div className="h-[7px] shrink-0 border-b border-[#8fb0a6] bg-[linear-gradient(90deg,#3f5a35,#55795f_20%,#2c4c40_50%,#3f6f60_80%,#2c5548)]" />
      <Badge />
    </div>
  );
}
